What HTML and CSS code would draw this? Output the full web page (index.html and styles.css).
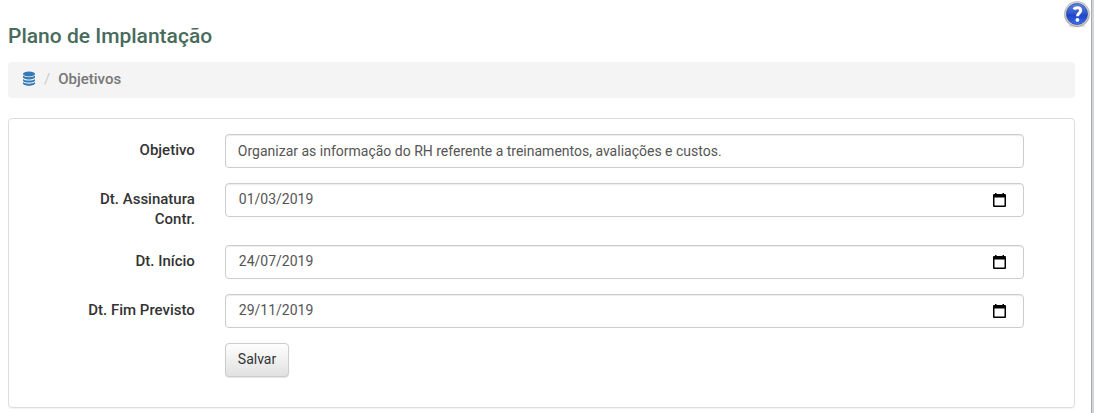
FILE: index.html
```html
<!DOCTYPE html>
<html lang="pt-BR">
<head>
    <meta charset="UTF-8">
    <meta name="viewport" content="width=device-width, initial-scale=1.0">
    <title>Plano de Implantação</title>
    <link rel="stylesheet" href="styles.css">
</head>
<body>
    <main class="page">
        <a href="#" class="help" aria-label="Ajuda">
            <svg width="28" height="28" viewBox="0 0 28 28">
                <defs>
                    <linearGradient id="ring" x1="0" y1="0" x2="0" y2="1">
                        <stop offset="0" stop-color="#c9c9c9"/>
                        <stop offset="1" stop-color="#a2a2a2"/>
                    </linearGradient>
                    <linearGradient id="ball" x1="0" y1="0" x2="0" y2="1">
                        <stop offset="0" stop-color="#5f83dc"/>
                        <stop offset="0.5" stop-color="#2c55cd"/>
                        <stop offset="0.55" stop-color="#1e45c4"/>
                        <stop offset="1" stop-color="#3d6bf0"/>
                    </linearGradient>
                </defs>
                <ellipse cx="14" cy="26" rx="9" ry="1.5" fill="#ddd"/>
                <circle cx="14" cy="14" r="12.9" fill="url(#ring)"/>
                <circle cx="14" cy="14" r="11.6" fill="#dcdcdc"/>
                <circle cx="14" cy="14" r="10.6" fill="url(#ball)" stroke="#2647a5" stroke-width="0.7"/>
                <path d="M10.8 9.4c.8-1.2 2-1.7 3.5-1.7 2 0 3.4 1 3.4 2.900 0 2.500-3.200 2.700-3.200 5.600" fill="none" stroke="#fff" stroke-width="3"/>
                <circle cx="14.4" cy="19.900" r="1.900" fill="#fff"/>
            </svg>
        </a>

        <h1>Plano de Implantação</h1>

        <nav class="breadcrumb">
            <a href="#" aria-label="Planos">
                <svg width="14" height="16" viewBox="0 0 14 16" fill="#337ab7">
                    <ellipse cx="7" cy="3" rx="6" ry="2.4"/>
                    <path d="M1 4.600c1 1.200 3.300 1.700 6 1.700s5-.5 6-1.700v1.700c0 1.200-2.700 2.200-6 2.200s-6-1-6-2.200z"/>
                    <path d="M1 7.900c1 1.200 3.300 1.700 6 1.700s5-.5 6-1.700v1.500c0 1.200-2.700 2.200-6 2.200s-6-1-6-2.200z"/>
                    <path d="M1 11c1 1.200 3.300 1.700 6 1.700s5-.5 6-1.700v1.600c0 1.200-2.700 2.200-6 2.200s-6-1-6-2.200z"/>
                </svg>
            </a>
            <span class="separator">/</span>
            <span>Objetivos</span>
        </nav>

        <form class="panel">
            <div class="form-group">
                <label for="objetivo">Objetivo</label>
                <div class="field">
                    <input type="text" id="objetivo" class="form-control" value="Organizar as informação do RH referente a treinamentos, avaliações e custos.">
                </div>
            </div>
            <div class="form-group">
                <label for="assinatura">Dt. Assinatura Contr.</label>
                <div class="field">
                    <div class="form-control date">
                        <input type="text" id="assinatura" inputmode="numeric" value="01/03/2019">
                        <button type="button" aria-label="Abrir calendário">
                            <svg width="15" height="16" viewBox="0 0 15 16"><path d="M1 3q0-1 1-1h1V1h1.500v1h6V1H12v1h1q1 0 1 1v11q0 1-1 1H2q-1 0-1-1zM2.500 5.500v8h10v-8z" fill-rule="evenodd"/></svg>
                        </button>
                    </div>
                </div>
            </div>
            <div class="form-group">
                <label for="inicio">Dt. Início</label>
                <div class="field">
                    <div class="form-control date">
                        <input type="text" id="inicio" inputmode="numeric" value="24/07/2019">
                        <button type="button" aria-label="Abrir calendário">
                            <svg width="15" height="16" viewBox="0 0 15 16"><path d="M1 3q0-1 1-1h1V1h1.500v1h6V1H12v1h1q1 0 1 1v11q0 1-1 1H2q-1 0-1-1zM2.500 5.500v8h10v-8z" fill-rule="evenodd"/></svg>
                        </button>
                    </div>
                </div>
            </div>
            <div class="form-group">
                <label for="fim">Dt. Fim Previsto</label>
                <div class="field">
                    <div class="form-control date">
                        <input type="text" id="fim" inputmode="numeric" value="29/11/2019">
                        <button type="button" aria-label="Abrir calendário">
                            <svg width="15" height="16" viewBox="0 0 15 16"><path d="M1 3q0-1 1-1h1V1h1.500v1h6V1H12v1h1q1 0 1 1v11q0 1-1 1H2q-1 0-1-1zM2.500 5.500v8h10v-8z" fill-rule="evenodd"/></svg>
                        </button>
                    </div>
                </div>
            </div>
            <div class="form-group">
                <div class="field">
                    <button type="submit" class="btn">Salvar</button>
                </div>
            </div>
        </form>
    </main>
</body>
</html>
```

FILE: styles.css
```css
* {
    box-sizing: border-box;
}
body {
    margin: 0;
    background-color: #d5d5dc;
    font-family: Roboto, Arial, sans-serif;
    font-size: 14px;
    line-height: 20px;
    color: #333;
}
.page {
    position: relative;
    min-height: 100vh;
    margin-right: 2px;
    padding: 24px 16px 5px 8px;
    background-color: #fff;
    border-right: 1px solid #a9a9b0;
}
.help {
    position: absolute;
    top: 0;
    right: 0;
}
.help svg {
    display: block;
}
h1 {
    margin: 0 0 14px;
    font-size: 21px;
    font-weight: 500;
    line-height: 24px;
    color: #486b5c;
}
.breadcrumb {
    display: flex;
    align-items: center;
    height: 36px;
    margin-bottom: 20px;
    padding: 0 14px 2px;
    background-color: #f4f4f4;
    border-radius: 4px;
    font-size: 15px;
    font-weight: 500;
    color: #777;
}
.breadcrumb svg {
    display: block;
}
.breadcrumb .separator {
    margin: 0 8px;
    font-weight: 400;
    color: #ccc;
}
.panel {
    padding: 15px 35px;
    border: 1px solid #ddd;
    border-radius: 4px;
    box-shadow: 0 1px 1px rgba(0, 0, 0, 0.05);
}
.form-group {
    display: grid;
    grid-template-columns: 2fr 10fr;
    margin-bottom: 15px;
}
.form-group label {
    padding: 6px 15px 1px 30px;
    text-align: right;
    font-size: 15px;
    font-weight: 500;
}
.field {
    grid-column: 2;
    padding: 0 15px;
}
.form-control {
    display: block;
    width: 100%;
    height: 34px;
    padding: 6px 12px;
    border: 1px solid #ccc;
    border-radius: 4px;
    background-color: #fff;
    box-shadow: inset 0 1px 1px rgba(0, 0, 0, 0.075);
    font: inherit;
    color: #555;
}
.date {
    display: flex;
    align-items: center;
    padding: 5px 16px 5px 13px;
}
.date input {
    flex: 1;
    padding: 0 0 2px;
    border: 0;
    background: none;
    font: inherit;
    color: inherit;
}
.date button {
    padding: 0;
    border: 0;
    background: none;
    cursor: pointer;
}
.date svg {
    display: block;
}
.btn {
    display: block;
    height: 34px;
    padding: 0 12px 2px;
    border: 1px solid #ccc;
    border-radius: 4px;
    background-image: linear-gradient(#fff, #e0e0e0);
    background-origin: border-box;
    box-shadow: 0 1px 1px rgba(0, 0, 0, 0.1);
    font: inherit;
    color: #333;
    cursor: pointer;
}
```
